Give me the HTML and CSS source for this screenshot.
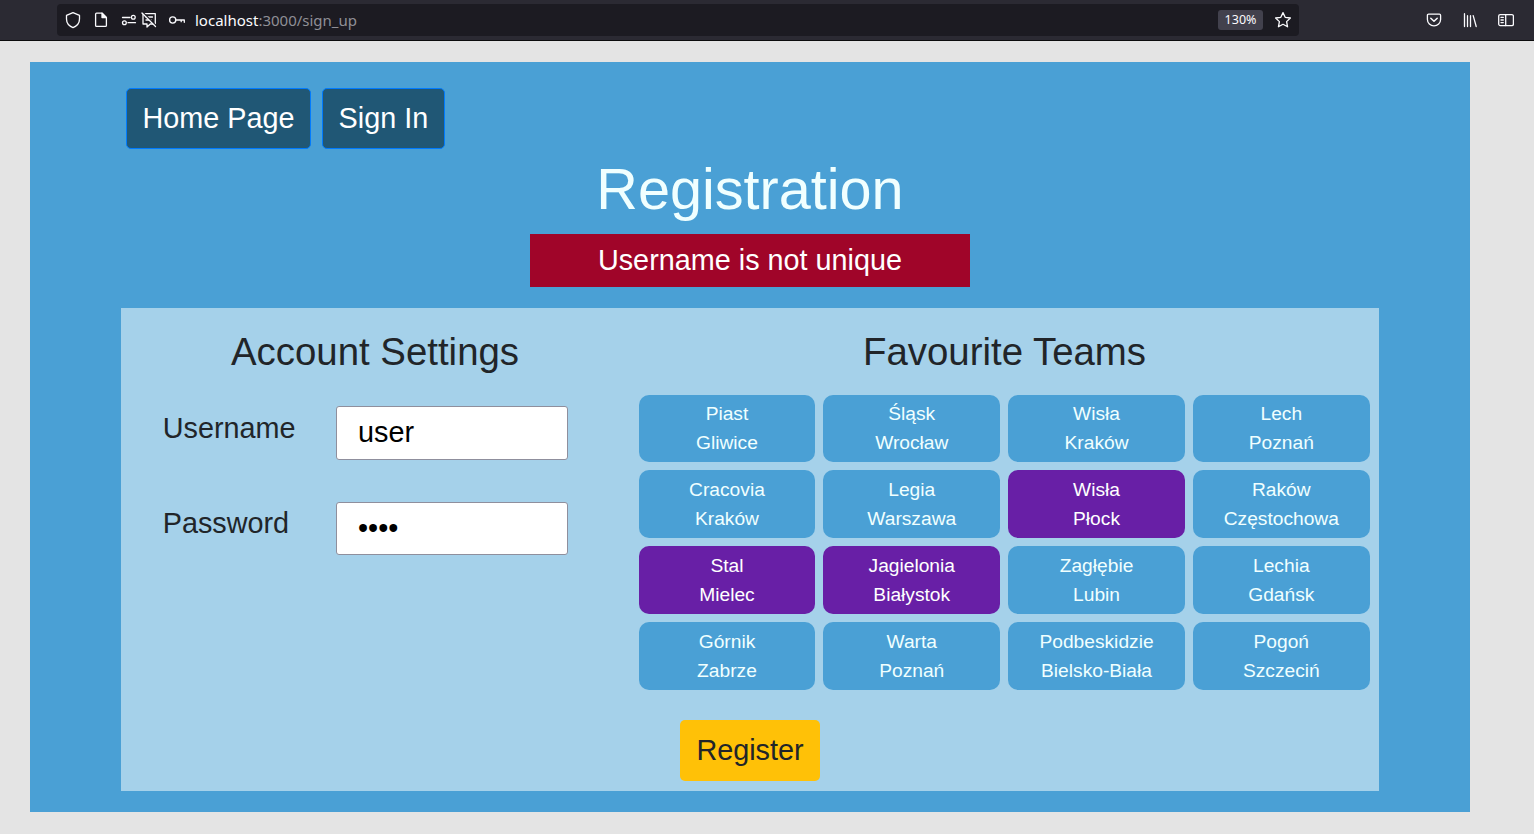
FILE: index.html
```html
<!DOCTYPE html>
<html lang="en">
<head>
<meta charset="utf-8">
<title>Registration</title>
<link rel="stylesheet" href="styles.css">
</head>
<body>
<header class="toolbar">
  <div class="urlbar">
    <svg class="icons-left" width="138" height="32" viewBox="0 0 138 32" fill="none" stroke="#fbfbfe" stroke-width="1.3" stroke-linejoin="round" stroke-linecap="round">
      <path d="M16 8.700l6.500 2.700v3.500c0 4-2.500 7-6.500 8.700c-4-1.700-6.500-4.700-6.500-8.700v-3.500z"/>
      <path d="M38.600 10.200q0-1 1-1h5.600l4.200 4.200v8q0 1-1 1h-8.800q-1 0-1-1z"/>
      <path d="M45 9.200v4.400h4.400z" fill="#fbfbfe"/>
      <path d="M65.500 13.500h7.500M71 18.700h7.500"/>
      <circle cx="76.300" cy="13.300" r="1.900"/><circle cx="67.400" cy="18.700" r="1.900"/>
      <path d="M86 9.700h12.300v10.300h-5l-3.300 3v-3h-4zM89 13h6.500M89 16h5"/>
      <path d="M86 8.500l13.500 13.500" stroke="#1c1b22" stroke-width="1.500"/>
      <path d="M85 9l13.500 13.500"/>
      <circle cx="115.700" cy="16" r="3.100"/><path d="M119 16h8.300v2.300M124.200 16v1.700"/>
    </svg>
    <span class="url"><span class="host">localhost</span>:3000/sign_up</span>
    <span class="zoom">130%</span>
    <svg class="star" width="18" height="18" viewBox="0 0 18 18" fill="none" stroke="#fbfbfe" stroke-width="1.300" stroke-linejoin="round"><path d="M9 1.600l2.200 4.700 5.200.7-3.800 3.600.95 5.200L9 13.300l-4.550 2.500.95-5.200L1.600 7l5.200-.7z"/></svg>
  </div>
  <div class="tools">
    <svg width="16" height="16" viewBox="0 0 16 16" fill="none" stroke="#fbfbfe" stroke-width="1.300" stroke-linecap="round" stroke-linejoin="round"><path d="M2.600 2.200h10.800q1.200 0 1.200 1.200v4.100a6.600 6.300 0 0 1-13.200 0v-4.100q0-1.200 1.200-1.200z"/><path d="M4.800 6.200L8 9.300l3.200-3.100" stroke-width="1.500"/></svg>
    <svg width="16" height="16" viewBox="0 0 16 16" fill="none" stroke="#fbfbfe" stroke-width="1.300" stroke-linecap="round"><path d="M2.500 1.700v12.800M5.500 3.700v10.800M8.500 3.700v10.800M11.200 3.700l3 10.800"/></svg>
    <svg width="16" height="16" viewBox="0 0 16 16" fill="none" stroke="#fbfbfe" stroke-width="1.300" stroke-linecap="round"><rect x=".7" y="2.600" width="14.700" height="11" rx="1.500"/><path d="M7.700 2.600v11M3 5.400h2.300M3 8h2.300M3 10.600h2.300"/></svg>
  </div>
</header>
<main class="page">
  <nav class="nav"><a class="btn">Home Page</a><a class="btn">Sign In</a></nav>
  <h1 class="title">Registration</h1>
  <div class="alert">Username is not unique</div>
  <form class="panel">
    <div class="columns">
      <section class="account">
        <h2 class="heading">Account Settings</h2>
        <div class="field"><label class="label" for="user">Username</label><input class="input" id="user" type="text" value="user"></div>
        <div class="field"><label class="label" for="pass">Password</label><input class="input" id="pass" type="password" value="user"></div>
      </section>
      <section class="favourites">
        <h2 class="heading">Favourite Teams</h2>
        <div class="teams">
          <div class="team">Piast<br>Gliwice</div><div class="team">Śląsk<br>Wrocław</div><div class="team">Wisła<br>Kraków</div><div class="team">Lech<br>Poznań</div>
          <div class="team">Cracovia<br>Kraków</div><div class="team">Legia<br>Warszawa</div><div class="team selected">Wisła<br>Płock</div><div class="team">Raków<br>Częstochowa</div>
          <div class="team selected">Stal<br>Mielec</div><div class="team selected">Jagielonia<br>Białystok</div><div class="team">Zagłębie<br>Lubin</div><div class="team">Lechia<br>Gdańsk</div>
          <div class="team">Górnik<br>Zabrze</div><div class="team">Warta<br>Poznań</div><div class="team">Podbeskidzie<br>Bielsko-Biała</div><div class="team">Pogoń<br>Szczeciń</div>
        </div>
      </section>
    </div>
    <button class="register" type="button">Register</button>
  </form>
</main>
</body>
</html>
```
FILE: styles.css
```css
* { box-sizing: border-box; }
body {
  margin: 0;
  height: 834px;
  overflow: hidden;
  background: #e4e4e4;
  color: #212529;
  font: 28.8px/1.5 "Liberation Sans", Arial, sans-serif;
}
.toolbar {
  display: flex;
  align-items: center;
  justify-content: space-between;
  height: 41px;
  padding: 0 20px 0 57px;
  background: #2b2a33;
  border-bottom: 1px solid #0c0c0d;
}
.urlbar {
  display: flex;
  align-items: center;
  width: 1242px;
  height: 32px;
  padding-right: 7px;
  border-radius: 4px;
  background: #1c1b22;
  font: 15px/20px "Noto Sans", sans-serif;
}
.icons-left { flex: none; }
.url { flex: 1; color: #8f8f96; }
.host { color: #fbfbfe; }
.zoom {
  width: 45px;
  height: 20px;
  margin-right: 11px;
  border-radius: 3px;
  background: #42414d;
  color: #fbfbfe;
  font-size: 12.5px;
  text-align: center;
}
.tools { display: flex; gap: 20px; width: 88px; }
.page {
  width: 1440px;
  height: 750px;
  margin: 21px 0 0 30px;
  padding: 26px 91px 0;
  background: #4aa0d5;
}
.nav { display: flex; gap: 11px; padding-left: 5px; }
.btn {
  height: 61px;
  padding: 8px 15.5px;
  border: 1px solid #007bff;
  border-radius: 5px;
  background: #205775;
  color: #fff;
}
.title {
  margin: 6px 0 10px;
  color: #f0ffff;
  font-size: 57.6px;
  font-weight: 400;
  line-height: 69px;
  text-align: center;
}
.alert {
  width: 440px;
  height: 53px;
  margin: 0 auto 21px;
  background: #a00529;
  color: #fff;
  line-height: 53px;
  text-align: center;
}
.panel { height: 483px; background: #a5d1ea; }
.columns { display: flex; height: 412px; }
.account { width: 509px; }
.favourites { width: 749px; }
.heading {
  margin: 0;
  padding-top: 21px;
  font-size: 38.4px;
  font-weight: 400;
  line-height: 46px;
  text-align: center;
}
.account .heading { width: 508px; margin-bottom: 31px; }
.favourites .heading { margin-bottom: 19.6px; }
.field { display: flex; height: 95.6px; padding-left: 41.7px; }
.label { width: 173.3px; line-height: 44px; }
.field + .field .label { line-height: 43.2px; }
.input {
  width: 232px;
  height: 53.6px;
  padding: 0 21px;
  border: 1px solid #8f8f9d;
  border-radius: 3px;
  background: #fff;
  color: #000;
  font: inherit;
}
.teams {
  display: grid;
  grid-template-columns: repeat(4, 1fr);
  gap: 8px;
  padding: 0 9.3px 0 8.6px;
}
.team {
  height: 67.8px;
  padding-top: 5.8px;
  border-radius: 10px;
  background: #4aa0d5;
  color: #f0ffff;
  font-size: 19.2px;
  line-height: 28.8px;
  text-align: center;
}
.selected { background: #681fa6; color: #fff; }
.register {
  display: block;
  width: 140px;
  height: 61px;
  margin: 0 auto;
  padding: 0;
  border: 0;
  border-radius: 5px;
  background: #ffc107;
  color: #212529;
  font: inherit;
}
```
